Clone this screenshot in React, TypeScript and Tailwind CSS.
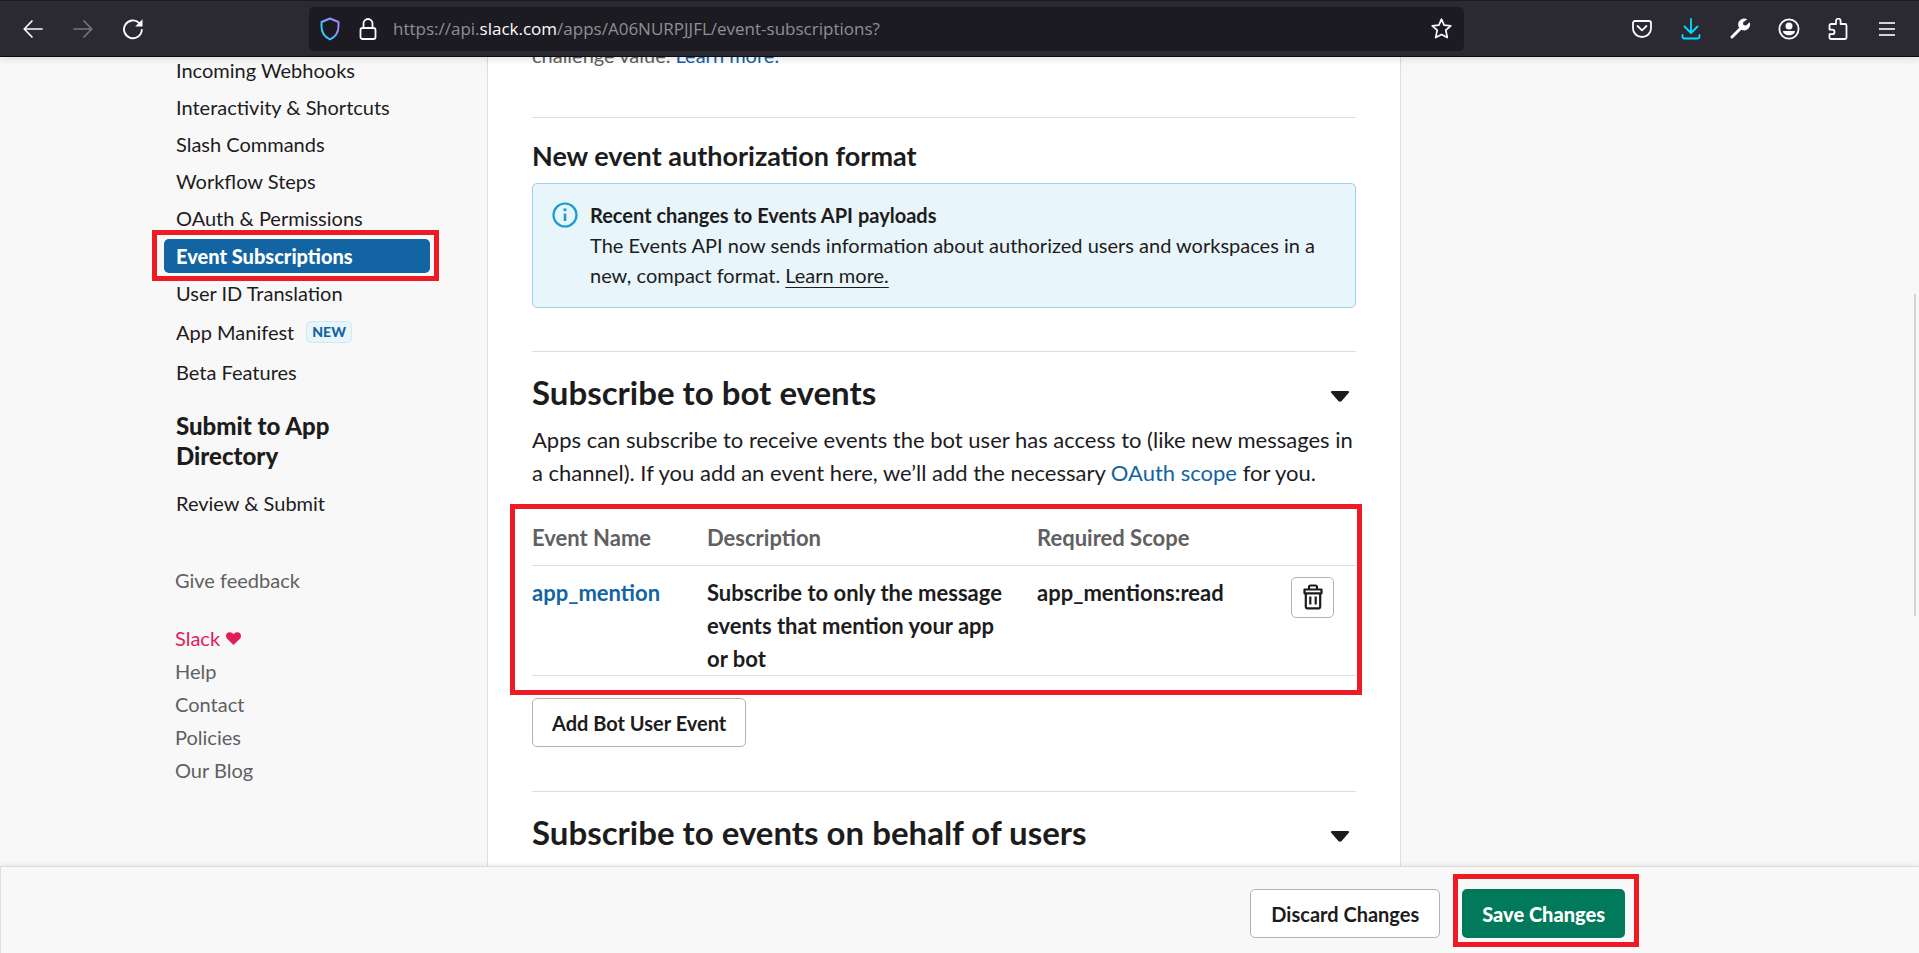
import React from "react";

const navTop = [
  "Incoming Webhooks",
  "Interactivity & Shortcuts",
  "Slash Commands",
  "Workflow Steps",
  "OAuth & Permissions",
];

const footerLinks = ["Help", "Contact", "Policies", "Our Blog"];

function Highlight({ className }: { className: string }) {
  return (
    <span
      aria-hidden="true"
      className={`pointer-events-none absolute border-[5px] border-[#ed1c24] ${className}`}
    />
  );
}

function ToolButton({ label, className = "", children }: { label: string; className?: string; children: React.ReactNode }) {
  return (
    <button aria-label={label} className={`flex w-[22px] items-center justify-center ${className}`}>
      {children}
    </button>
  );
}

function BrowserBar() {
  return (
    <header className="relative z-10 flex h-[57px] shrink-0 items-center border-t border-b border-t-[#1c1b22] border-b-[#0c0c0d] bg-[#2b2a33] shadow-[0_2px_8px_rgba(0,0,0,0.12)]">
      <div className="flex w-[309px] shrink-0 items-center gap-7 pl-[22px] text-[#fbfbfe]">
        <ToolButton label="Back">
          <svg width="20" height="20" viewBox="0 0 20 20" fill="none" stroke="currentColor" strokeWidth="1.7" strokeLinecap="round" strokeLinejoin="round">
            <path d="M19 10H1.5M9 2 1.2 10 9 18" />
          </svg>
        </ToolButton>
        <ToolButton label="Forward" className="text-[#76757c]">
          <svg width="20" height="20" viewBox="0 0 20 20" fill="none" stroke="currentColor" strokeWidth="1.7" strokeLinecap="round" strokeLinejoin="round">
            <path d="M1 10h17.5M11 2l7.8 8L11 18" />
          </svg>
        </ToolButton>
        <ToolButton label="Reload">
          <svg width="22" height="22" viewBox="0 0 22 22" fill="none">
            <path d="M19.8 12a8.900 8.900 0 1 1-2.600-7" stroke="currentColor" strokeWidth="1.9" strokeLinecap="round" />
            <path d="M20.500 1.200v7.300h-7.300z" fill="currentColor" />
          </svg>
        </ToolButton>
      </div>
      <div className="flex h-11 min-w-0 flex-1 items-center rounded-[5px] bg-[#1c1b22] pl-[10px] pr-3">
        <svg className="shrink-0" width="22" height="24" viewBox="0 0 22 24" fill="none">
          <defs>
            <linearGradient id="shield" x1="0" y1="1" x2="1" y2="0">
              <stop offset="0.3" stopColor="#3fc8ff" />
              <stop offset="0.8" stopColor="#9a8cff" />
            </linearGradient>
          </defs>
          <path d="M11 1.500 19.500 5v4.500c0 6-3 10.200-8.500 13-5.500-2.800-8.500-7-8.500-13V5z" stroke="url(#shield)" strokeWidth="1.9" strokeLinejoin="round" />
        </svg>
        <svg className="ml-[18px] shrink-0" width="18" height="22" viewBox="0 0 18 22" fill="none" stroke="#fbfbfe" strokeWidth="1.8">
          <rect x="1.500" y="10" width="15" height="11" rx="2" />
          <path d="M4.500 10V5.500a4.500 4.500 0 0 1 9 0V10" />
        </svg>
        <div className="ml-4 min-w-0 flex-1 font-['Open_Sans',sans-serif] text-[17px] leading-7 whitespace-nowrap text-[#8f8f94]">
          https://api.<span className="text-[#fbfbfe]">slack.com</span>/apps/A06NURPJJFL/event-subscriptions?
        </div>
        <button aria-label="Bookmark">
          <svg width="21" height="21" viewBox="0 0 21 21" fill="none" stroke="#fbfbfe" strokeWidth="1.7" strokeLinejoin="round">
            <path d="m10.500 1.200 2.600 5.900 6.700.7-5 4.400 1.500 7.300-5.800-2.900-5.800 2.900 1.500-7.300-5-4.400 6.700-.7z" />
          </svg>
        </button>
      </div>
      <div className="flex shrink-0 items-center gap-[27px] pr-[21px] pl-[167px] text-[#fbfbfe]">
        <ToolButton label="Pocket">
          <svg width="20" height="20" viewBox="0 0 20 20" fill="none" stroke="currentColor" strokeWidth="1.8" strokeLinecap="round" strokeLinejoin="round">
            <path d="M3 2h14a2 2 0 0 1 2 2v5.500a9 8.500 0 0 1-18 0V4a2 2 0 0 1 2-2z" />
            <path d="m5.500 7 4.500 4.300L14.500 7" />
          </svg>
        </ToolButton>
        <ToolButton label="Downloads" className="text-[#00ddff]">
          <svg width="20" height="22" viewBox="0 0 20 22" fill="none" stroke="currentColor" strokeWidth="1.8" strokeLinecap="round" strokeLinejoin="round">
            <path d="M10 1v14M3.500 8.500 10 15l6.500-6.500M1.500 17v1.500a2 2 0 0 0 2 2h13a2 2 0 0 0 2-2V17" />
          </svg>
        </ToolButton>
        <ToolButton label="Tools">
          <svg width="21" height="21" viewBox="0 0 21 21" fill="none">
            <path d="M2 19 12 9" stroke="currentColor" strokeWidth="3" strokeLinecap="round" />
            <path d="M17.300 1.300a6 6 0 1 0 2.700 6.500c.3-1 .2-2.300-.4-3.500l-3.500 3.300-2.700-.5-.4-2.600z" fill="currentColor" />
          </svg>
        </ToolButton>
        <ToolButton label="Account">
          <svg width="22" height="22" viewBox="0 0 22 22" fill="none">
            <circle cx="11" cy="11" r="9.600" stroke="currentColor" strokeWidth="1.8" />
            <circle cx="11" cy="8" r="3.500" fill="currentColor" />
            <path d="M5 13h12c0 2.500-2.700 4.300-6 4.300S5 15.500 5 13z" fill="currentColor" />
          </svg>
        </ToolButton>
        <ToolButton label="Extensions">
          <svg width="20" height="22" viewBox="0 0 20 22" fill="none" stroke="currentColor" strokeWidth="1.8" strokeLinejoin="round">
            <path d="M8 6V3a2.300 2.300 0 0 1 4.600 0v3H17a1.500 1.500 0 0 1 1.500 1.500v12A1.500 1.500 0 0 1 17 21H3a1.500 1.500 0 0 1-1.500-1.500v-3.300h2.700a2.300 2.300 0 0 0 0-4.600H1.500V7.500A1.500 1.500 0 0 1 3 6z" />
          </svg>
        </ToolButton>
        <ToolButton label="Menu">
          <svg width="18" height="16" viewBox="0 0 18 16" stroke="#d4d4d8" strokeWidth="1.8">
            <path d="M1 2h16M1 8h16M1 14h16" />
          </svg>
        </ToolButton>
      </div>
    </header>
  );
}

function NavItem({ children }: { children: React.ReactNode }) {
  return (
    <li>
      <a href="#" className="block px-3 leading-[34px]">{children}</a>
    </li>
  );
}

function Sidebar() {
  return (
    <aside className="-mt-1 w-[266px] shrink-0 text-[20px]">
      <ul className="flex flex-col gap-[3px]">
        {navTop.map((label) => (
          <NavItem key={label}>{label}</NavItem>
        ))}
      </ul>
      <ul className="mt-1 flex flex-col gap-[3px]">
        <li className="relative">
          <a href="#" aria-current="page" className="block rounded-[5px] bg-[#1264a3] px-3 leading-[34px] font-black text-white">
            Event Subscriptions
          </a>
          <Highlight className="-top-[9px] -right-[9px] -bottom-2 -left-3" />
        </li>
        <NavItem>User ID Translation</NavItem>
        <li className="pb-[2px]">
          <a href="#" className="flex h-[37px] items-center gap-3 px-3">
            App Manifest
            <span className="rounded-[5px] border border-[#d0e9f3] bg-[#e8f5fa] px-[5px] text-[14px] leading-5 font-black text-[#1264a3]">
              NEW
            </span>
          </a>
        </li>
        <NavItem>Beta Features</NavItem>
      </ul>
      <h2 className="mt-[22px] w-[190px] pl-3 text-[24px] leading-[30px] font-black">Submit to App Directory</h2>
      <ul className="mt-[15px]">
        <NavItem>Review &amp; Submit</NavItem>
      </ul>
      <div className="mt-11 pl-[11px] leading-[33px] text-[#616061]">
        <a href="#">Give feedback</a>
        <ul className="mt-[25px]">
          <li>
            <a href="#" className="flex items-center gap-[6px] text-[#e01e5a]">
              Slack
              <svg width="15" height="13" viewBox="0 0 15 13" fill="currentColor">
                <path d="M7.500 13 1.100 6.800A4 4 0 0 1 0 4 3.800 3.800 0 0 1 3.800.2C5.400.2 6.800 1 7.500 2.300 8.200 1 9.600.2 11.200.2A3.800 3.800 0 0 1 15 4c0 1.100-.4 2-1.100 2.800z" />
              </svg>
            </a>
          </li>
          {footerLinks.map((label) => (
            <li key={label}>
              <a href="#">{label}</a>
            </li>
          ))}
        </ul>
      </div>
    </aside>
  );
}

function SectionHeader({ title }: { title: string }) {
  return (
    <div className="mt-[21px] flex items-end justify-between pr-[7px]">
      <h2 className="text-[33px] leading-[38px] font-bold">{title}</h2>
      <button aria-label={`Toggle ${title}`} className="pb-[9px]">
        <svg className="block" width="18" height="11" viewBox="0 0 18 11" fill="currentColor">
          <path d="M1.200 0h15.600c1.100 0 1.600 1.200.8 2l-7 8a2.300 2.300 0 0 1-3.200 0l-7-8C-.4 1.200.1 0 1.200 0z" />
        </svg>
      </button>
    </div>
  );
}

function Content() {
  return (
    <main className="max-w-[914px] min-w-0 flex-1 border-x border-[#ddd] bg-white px-11">
      <p className="-mt-[18px] text-[20px] leading-[33px] text-[#616061]">
        challenge value. <a href="#" className="text-[#1264a3]">Learn more.</a>
      </p>

      <hr className="mt-[45px] border-[#ddd]" />
      <h3 className="mt-[22px] text-[27px] leading-8 font-bold">New event authorization format</h3>
      <div className="mt-[11px] flex gap-3 rounded-[5px] border border-[#9bd1e5] bg-[#e8f5fa] pt-4 pr-5 pb-[17px] pl-[19px]">
        <svg className="mt-[2px] shrink-0" width="26" height="26" viewBox="0 0 26 26" fill="none" stroke="#1d9bd1">
          <circle cx="13" cy="13" r="11.500" strokeWidth="2.200" />
          <path d="M13 11.500V19" strokeWidth="2.600" />
          <path d="M13 6.500v2.600" strokeWidth="3" />
        </svg>
        <p className="text-[20px] leading-[30px]">
          <strong className="font-bold">Recent changes to Events API payloads</strong>
          <br />
          The Events API now sends information about authorized users and workspaces in a new, compact format.{" "}
          <a href="#" className="underline decoration-1 underline-offset-4">Learn more.</a>
        </p>
      </div>

      <hr className="mt-[43px] border-[#ddd]" />
      <SectionHeader title="Subscribe to bot events" />
      <p className="mt-3 text-[22px] leading-[33px]">
        Apps can subscribe to receive events the bot user has access to (like new messages in a channel). If you add
        an event here, we’ll add the necessary <a href="#" className="text-[#1264a3]">OAuth scope</a> for you.
      </p>

      <div className="relative mt-[22px]">
        <table className="w-full table-fixed border-collapse text-left text-[22px] leading-[33px]">
          <thead>
            <tr className="border-b border-[#ddd] text-[#616061]">
              <th className="w-[175px] pt-[10px] pb-[11px] font-bold">Event Name</th>
              <th className="w-[330px] pt-[10px] pb-[11px] font-bold">Description</th>
              <th className="pt-[10px] pb-[11px] font-bold">Required Scope</th>
              <td className="w-[65px]" />
            </tr>
          </thead>
          <tbody>
            <tr className="border-b border-[#ddd] align-top font-bold">
              <td className="pt-[10px]">
                <a href="#" className="text-[#1264a3]">app_mention</a>
              </td>
              <td className="pt-[10px] pr-7">Subscribe to only the message events that mention your app or bot</td>
              <td className="pt-[10px]">app_mentions:read</td>
              <td className="pt-[11px]">
                <button aria-label="Delete event" className="flex h-[41px] w-[43px] items-center justify-center rounded-[5px] border border-[#b3b3b3] bg-white pb-[2px]">
                  <svg width="20" height="26" viewBox="0 0 20 26" fill="none" stroke="#1d1c1d" strokeWidth="2.200" strokeLinejoin="round">
                    <path d="M6 5V3a1.500 1.500 0 0 1 1.500-1.500h5A1.500 1.500 0 0 1 14 3v2" />
                    <path d="M1.500 5.500h17v3.800h-17z" />
                    <path d="M2.800 9.500v13.300a1.500 1.500 0 0 0 1.500 1.500h11.400a1.500 1.500 0 0 0 1.500-1.500V9.500" />
                    <path d="M7.300 12.500v8M12.700 12.500v8" />
                  </svg>
                </button>
              </td>
            </tr>
          </tbody>
        </table>
        <Highlight className="-top-[7px] -right-[6px] -bottom-[19px] -left-[22px]" />
      </div>
      <button className="mt-[22px] h-[49px] rounded-[5px] border border-[#b3b3b3] bg-white px-[19px] text-[20px] font-bold">
        Add Bot User Event
      </button>

      <hr className="mt-11 border-[#ddd]" />
      <SectionHeader title="Subscribe to events on behalf of users" />
    </main>
  );
}

export default function App() {
  return (
    <div className="flex h-screen flex-col overflow-hidden bg-[#f8f8f8] font-[Lato,sans-serif] text-[#1d1c1d]">
      <BrowserBar />
      <div className="relative flex min-h-0 flex-1 gap-[57px] overflow-hidden px-[164px]">
        <Sidebar />
        <Content />
        <span aria-hidden="true" className="absolute top-[237px] right-[3px] h-[322px] w-[2px] bg-[#d4d4d4]" />
      </div>
      <footer className="relative z-10 flex h-[87px] shrink-0 items-start justify-end gap-[22px] border-t border-l border-[#ddd] bg-[#f8f8f8] pt-[22px] pr-[294px] shadow-[0_-1px_4px_rgba(0,0,0,0.08)]">
        <button className="h-[49px] rounded-[5px] border border-[#b3b3b3] bg-white px-5 text-[20px] font-bold">
          Discard Changes
        </button>
        <div className="relative">
          <button className="h-[49px] rounded-[5px] bg-[#007a5a] px-5 text-[20px] font-black text-white">
            Save Changes
          </button>
          <Highlight className="-top-[15px] -right-[14px] -bottom-[9px] -left-[9px]" />
        </div>
      </footer>
    </div>
  );
}
